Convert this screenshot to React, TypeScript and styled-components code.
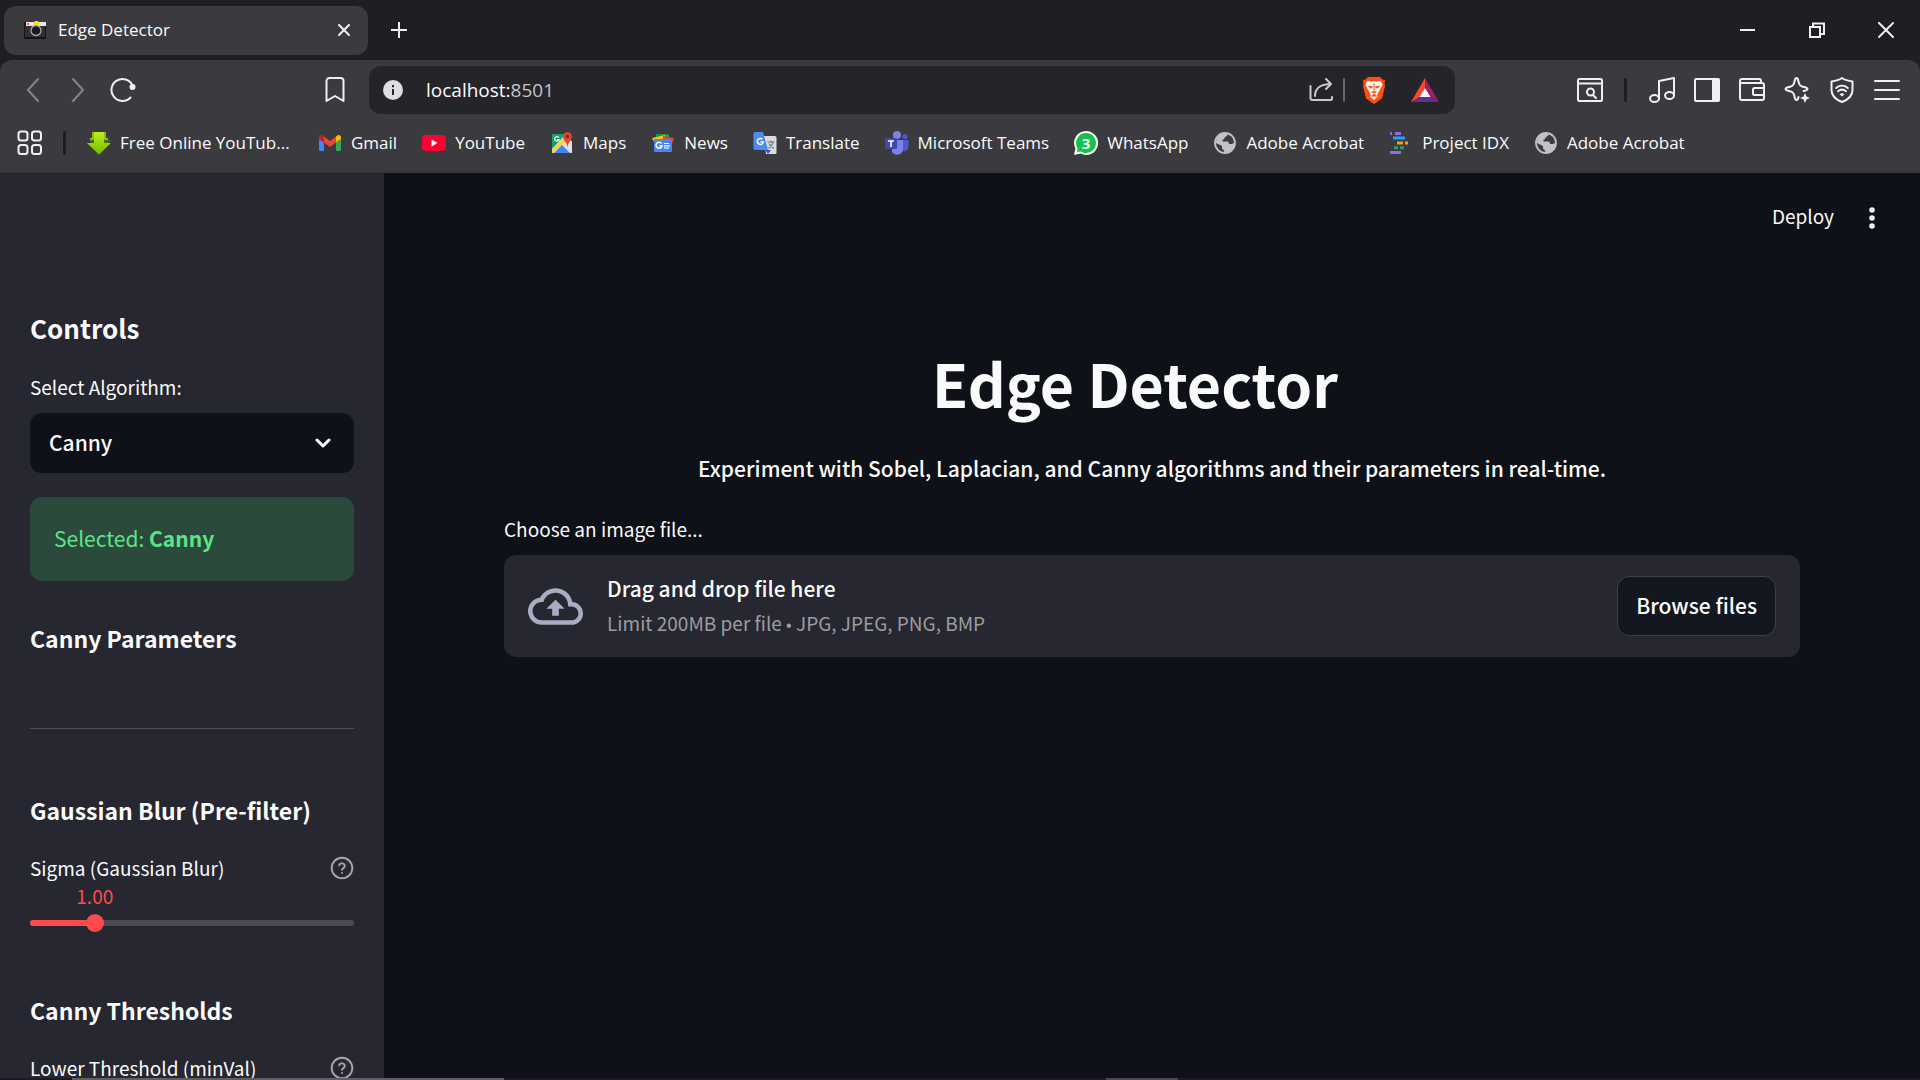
import React, { useState } from 'react';
import styled, { createGlobalStyle } from 'styled-components';

const ui = '"Segoe UI", "Open Sans", "Noto Sans", sans-serif';
const app = '"Source Sans Pro", "Noto Sans CJK SC", sans-serif';

const Global = createGlobalStyle`
  *, *::before, *::after { box-sizing: border-box; }
  body { margin: 0; background: #0e1117; overflow: hidden; }
  button, input, select { font: inherit; color: inherit; }
  h1, h2, h3, p { margin: 0; }
`;

const Window = styled.div`
  display: flex; flex-direction: column; height: 100vh; overflow: hidden;
  background: #1f1e23; color: #fafafa; font-family: ${ui}; font-size: 18px;
`;
const IconButton = styled.button<{ $w?: number; $dim?: boolean }>`
  display: flex; align-items: center; justify-content: center; flex: none;
  width: ${p => p.$w ?? 45}px; height: 48px; padding: 0; border: 0; background: none;
  color: ${p => (p.$dim ? '#858488' : '#f0f0f4')};
  svg { display: block; }
`;
const TabStrip = styled.div`
  display: flex; align-items: center; flex: none; height: 60px; padding-left: 4px;
`;
const Tab = styled.div`
  display: flex; align-items: center; width: 364px; height: 49px; padding: 0 2px 0 20px;
  border-radius: 12px; background: #3b3a3f;
`;
const TabTitle = styled.span`flex: 1; margin-left: 12px; font-size: 17px; line-height: 24px;`;
const Spacer = styled.div`flex: 1;`;
const Chrome = styled.header`
  flex: none; height: 113px; background: #3b3a3f; border-radius: 12px 12px 0 0;
  border-bottom: 2px solid #36353a;
`;
const Toolbar = styled.div`display: flex; align-items: center; height: 60px; padding: 0 11px 0 10px;`;
const NavButtons = styled.div`display: flex; margin-right: 167px;`;
const Divider = styled.span<{ $light?: boolean }>`
  width: ${p => (p.$light ? 2 : 3)}px; height: 24px; border-radius: 1px; flex: none;
  background: ${p => (p.$light ? '#66656a' : '#1f1e23')};
`;
const ToolDivider = styled(Divider)`margin: 0 12px;`;
const Address = styled.div`
  display: flex; align-items: center; flex: 1; height: 48px; margin: 0 112px 0 12px; padding: 0 8px 0 14px;
  border-radius: 12px; background: #252429;
`;
const AddressField = styled.label`
  position: relative; flex: 1; margin-left: 23px; font-size: 19px; line-height: 28px;
  span { color: #c4c4c8; }
`;
const AddressInput = styled.input`
  position: absolute; inset: 0; width: 100%; border: 0; padding: 0; background: none;
  color: transparent; outline: 0;
`;
const Bookmarks = styled.nav`display: flex; align-items: center; height: 46px; padding: 0 7px;`;
const BookmarkDivider = styled(Divider)`margin: 0 21px 0 11px;`;
const BookmarkList = styled.div`display: flex; align-items: center; gap: 25px;`;
const Bookmark = styled.a<{ $long?: boolean }>`
  display: flex; align-items: center; gap: 9px; color: inherit; text-decoration: none;
  font-size: 17px; line-height: 24px; white-space: nowrap; width: ${p => (p.$long ? '206px' : 'auto')};
  svg { display: block; flex: none; }
`;

const Page = styled.div`
  display: flex; flex: 1; min-height: 0; background: #0e1117; font-family: ${app}; font-size: 21px;
  font-weight: 500;
`;
const Sidebar = styled.aside`
  flex: none; width: 384px; padding: 137px 30px 0; background: #262730; overflow: hidden;
`;
const Heading = styled.h2`font-size: 26px; line-height: 36px; font-weight: 600;`;
const SubHeading = styled.h3`font-size: 23px; line-height: 36px; font-weight: 600;`;
const FieldLabel = styled.label`display: block; font-size: 19px; line-height: 32px; font-weight: 400;`;
const SelectBox = styled.div`
  position: relative; margin-top: 10px;
  svg { position: absolute; right: 23px; top: 25px; pointer-events: none; }
`;
const Select = styled.select`
  display: block; width: 100%; height: 60px; padding: 0 19px 2px; border: 0; border-radius: 12px;
  appearance: none; background: #0e1117; font-size: 21px;
`;
const Success = styled.p`
  margin-top: 24px; padding: 23px 24px 25px; border-radius: 12px; background: #2b4a3c; color: #5ce488;
  font-size: 21px; line-height: 36px; font-weight: 400;
`;
const Rule = styled.hr`margin: 72px 0 63px; border: 0; height: 1px; background: #4c4d56;`;
const Row = styled.div`display: flex; align-items: center; justify-content: space-between;`;
const Help = styled.button`
  display: flex; width: 24px; height: 24px; padding: 0; border: 0; background: none; color: #a3a3a8;
`;
const SliderValue = styled.output`
  display: block; width: 60px; font-size: 19px; line-height: 24px; font-weight: 400;
  text-align: center; color: #ff4b4b;
`;
const SliderBox = styled.div`
  position: relative; display: flex; align-items: center; height: 18px; margin-top: 6px;
`;
const Track = styled.div`flex: 1; height: 6px; border-radius: 3px; background: #4a4b55;`;
const Fill = styled.div`height: 6px; border-radius: 3px; background: #ff4b4b;`;
const Slider = styled.input`
  position: absolute; left: -9px; top: 0; width: calc(100% + 18px); height: 18px; margin: 0;
  appearance: none; background: none;
  &::-webkit-slider-thumb {
    appearance: none; width: 18px; height: 18px; border-radius: 50%; background: #ff4b4b;
  }
`;
const Gap = styled.div<{ $h: number }>`height: ${p => p.$h}px;`;

const Main = styled.main`flex: 1; min-width: 0;`;
const AppBar = styled.div`
  display: flex; align-items: center; justify-content: flex-end; height: 90px; padding: 0 33px 0 0;
`;
const Deploy = styled.button`
  border: 0; padding: 0 0 4px; margin-right: 23px; background: none; font-size: 19px; line-height: 32px;
  font-weight: 400;
`;
const Content = styled.div`padding: 80px 120px 0;`;
const Title = styled.h1`
  padding-right: 34px; font-size: 59px; line-height: 80px; font-weight: 700; text-align: center;
`;
const Lead = styled.p`margin-top: 27px; line-height: 36px; text-align: center;`;
const Drop = styled.div`
  display: flex; align-items: center; height: 102px; margin-top: 10px; padding: 0 24px;
  border-radius: 12px; background: #262730;
`;
const DropText = styled.div`flex: 1; margin-left: 24px;`;
const DropTitle = styled.div`line-height: 36px;`;
const DropNote = styled.div`font-size: 19px; line-height: 34px; font-weight: 400; color: #9c9ca1;`;
const Bullet = styled.span`font-family: "Liberation Sans", sans-serif; font-size: 16px;`;
const Browse = styled.button`
  height: 60px; padding: 0 18px 2px; border: 1px solid #3e4048; border-radius: 12px; background: #131720;
  font-size: 21px;
`;
const Taskbar = styled.div`
  flex: none; height: 2px;
  background: linear-gradient(to right, #1c1b1c 72px, #5f5e60 72px, #5f5e60 504px, #1c1b1c 504px, #1c1b1c 1106px, #4b4b4c 1106px, #4b4b4c 1178px, #1c1b1c 1178px);
`;

const line = { fill: 'none', stroke: 'currentColor', strokeWidth: 2, strokeLinecap: 'round' as const, strokeLinejoin: 'round' as const };

const Camera = () => (
  <svg width="22" height="20" viewBox="0 0 22 20">
    <rect x="0" y="2" width="22" height="17" rx="1" fill="#151515" />
    <rect x="1" y="6" width="20" height="11" fill="#303030" />
    <rect x="2" y="2" width="20" height="4" fill="#e8e8e8" />
    <circle cx="4" cy="4" r="1" fill="#e33" />
    <circle cx="12" cy="10.500" r="5" fill="#1b1b1b" stroke="#a9a9a9" strokeWidth="1.300" />
    <path d="M9 3h1l1-2h3l1 2h1l-2 2h-3z" fill="#ffe000" />
  </svg>
);
const Globe = () => (
  <svg width="24" height="24" viewBox="0 0 24 24">
    <circle cx="12" cy="12" r="10" fill="none" stroke="#bfc2c7" strokeWidth="1.800" />
    <path d="M3 12C3 6 7 2 13 2.500c1.500.5 2 1 1 2.200L11.500 6.500c0 1.500-.5 2-2 2v2h5c1 0 1.500 1 1.500 2.500h2.500c1 0 1.500-.8 3-1C21.500 17 18 21.500 12 21.500c-1-.4-1-1-1-2.500-1.500 0-2-1-2-2.500v-1.500z" fill="#bfc2c7" />
  </svg>
);
const bookmarks: { label: string; icon: React.ReactNode; long?: boolean }[] = [
  { label: 'Free Online YouTub...', long: true, icon: (
    <svg width="24" height="24" viewBox="0 0 24 24">
      <defs><linearGradient id="dl" x1="0" y1="0" x2="0" y2="1"><stop offset="0" stopColor="#b9f01e" /><stop offset="1" stopColor="#76b900" /></linearGradient></defs>
      <path d="M2 7h3V1h14v6h3l-2 2h4L12 24 0 12h4z" fill="#4b6b10" />
      <path d="M7 1h10v11h7L12 23.500 0 12h7z" fill="url(#dl)" />
      <path d="M3 8h3V1M21 8h-3V1" fill="none" stroke="#9fdc12" strokeWidth="1.500" />
    </svg>) },
  { label: 'Gmail', icon: (
    <svg width="24" height="24" viewBox="0 0 24 24">
      <path d="M1 8v10.500A1.500 1.500 0 0 0 2.500 20H6v-8.500z" fill="#4285f4" />
      <path d="M18 20h3.500a1.500 1.500 0 0 0 1.500-1.500V8l-5 3.500z" fill="#34a853" />
      <path d="M18 5.500v6L23 8V6.200c0-2-2.200-3-3.800-1.800z" fill="#fbbc04" />
      <path d="M6 11.500v-6L12 10l6-4.500v6L12 16z" fill="#ea4335" />
      <path d="M1 6.200V8l5 3.500v-6L4.800 4.400C3.200 3.200 1 4.200 1 6.200z" fill="#c5221f" />
    </svg>) },
  { label: 'YouTube', icon: (
    <svg width="24" height="24" viewBox="0 0 24 24">
      <rect y="4" width="24" height="16" rx="4" fill="#ff0033" /><path d="M9.500 8.500v7l6-3.500z" fill="#fff" />
    </svg>) },
  { label: 'Maps', icon: (
    <svg width="24" height="24" viewBox="0 0 24 24">
      <rect x="2" y="3" width="19" height="19" rx="1" fill="#e4e4e4" />
      <path d="M2 3h14L2 18z" fill="#1aa260" />
      <path d="M2 22v-3L15 6l3 4z" fill="#ffce3a" /><path d="M12 13l9 9h1V10z" fill="#dfe1e4" /><path d="M4 22l8-8 8 8z" fill="#4285f4" />
      <path d="M17.500 1a4.500 4.500 0 0 1 4.500 4.500c0 4-4 5-4.500 11-.5-6-4.500-7-4.500-11A4.500 4.500 0 0 1 17.500 1z" fill="#e04434" />
      <circle cx="17.500" cy="5.500" r="1.700" fill="#8c241c" />
      <path d="M8.800 6.500a2.300 2.300 0 1 0 .3 2.200H7" fill="none" stroke="#fff" strokeWidth="1.200" />
    </svg>) },
  { label: 'News', icon: (
    <svg width="24" height="24" viewBox="0 0 24 24">
      <path d="M5 3h13v8H5z" fill="#139a50" /><path d="M1 7l13-3 2 9H4z" fill="#ffc107" /><path d="M12 5l11 2-3 10h-9z" fill="#e5403a" />
      <rect x="3" y="8" width="18" height="13" rx="1" fill="#4a86f3" />
      <path d="M10.500 12.500a3 3 0 1 0 .5 2.500H8.500" fill="none" stroke="#fff" strokeWidth="1.500" />
      <path d="M13 12.500h5M13 14.800h6M13 17h5" stroke="#fff" strokeWidth="1.200" />
    </svg>) },
  { label: 'Translate', icon: (
    <svg width="24" height="24" viewBox="0 0 24 24">
      <path d="M10 5h12a1.500 1.500 0 0 1 1.500 1.500v15A1.500 1.500 0 0 1 22 23h-9z" fill="#dcdcdc" />
      <path d="M13 19h-1l3 4 3-4z" fill="#3b4fc0" />
      <path d="M2 1h8l5 18H2a1.500 1.500 0 0 1-1.500-1.500v-15A1.500 1.500 0 0 1 2 1z" fill="#4c8bf5" />
      <path d="M9.500 8.300a3 3 0 1 0 .8 2.700H7.500" fill="none" stroke="#fff" strokeWidth="1.500" />
      <path d="M14.500 11h7M18 9.500V11M20 11c-.5 3-2.500 5-4.500 6.500M16 12.500c1 2 3 4 5 5" fill="none" stroke="#64767c" strokeWidth="1.200" />
    </svg>) },
  { label: 'Microsoft Teams', icon: (
    <svg width="24" height="24" viewBox="0 0 24 24">
      <circle cx="12" cy="4" r="4" fill="#7b83eb" /><circle cx="20" cy="5.500" r="2.600" fill="#5059c9" />
      <path d="M15 9h8.500v7a4.500 4.500 0 0 1-7 3.500z" fill="#5059c9" />
      <path d="M7 9h11v9a6 6 0 0 1-11 3z" fill="#7b83eb" />
      <rect x="0" y="7" width="12" height="11" rx="1" fill="#4048b0" />
      <path d="M3 10h6M6 10v6" stroke="#fff" strokeWidth="1.700" />
    </svg>) },
  { label: 'WhatsApp', icon: (
    <svg width="24" height="24" viewBox="0 0 24 24">
      <path d="M12 0a12 12 0 1 1-5.500 22.600L0 24l1.400-6.500A12 12 0 0 1 12 0z" fill="#f4fff6" />
      <path d="M12 2a10 10 0 1 1-5.300 18.500L3 21l.6-3.800A10 10 0 0 1 12 2z" fill="#13c14b" />
      <text x="12" y="17.500" textAnchor="middle" fontFamily="Open Sans" fontSize="15" fontWeight="700" fill="#fff">3</text>
    </svg>) },
  { label: 'Adobe Acrobat', icon: <Globe /> },
  { label: 'Project IDX', icon: (
    <svg width="24" height="24" viewBox="0 0 24 24" fill="none" strokeWidth="3">
      <path d="M1 2.500h2M6 2.500h6M1 21.500h11" stroke="#9168f0" />
      <path d="M4 7h12" stroke="#2a9df4" /><path d="M8 12h6M16 12h3" stroke="#f59b2c" /><path d="M5 16.700h4M11 16.700h4" stroke="#21a366" />
    </svg>) },
  { label: 'Adobe Acrobat', icon: <Globe /> },
];

const HelpIcon = () => (
  <svg width="24" height="24" viewBox="0 0 24 24" {...line}>
    <circle cx="12" cy="12" r="10.300" /><path d="M9.200 9.200a2.900 2.900 0 0 1 5.600.9c0 1.900-2.800 2.500-2.800 3.700M12 17v.1" />
  </svg>
);

export default function App() {
  const [sigma, setSigma] = useState(1);
  const fill = (sigma / 5) * 100;
  return (
    <Window>
      <Global />
      <TabStrip>
        <Tab>
          <Camera />
          <TabTitle>Edge Detector</TabTitle>
          <IconButton aria-label="Close tab"><svg width="12" height="12" viewBox="0 0 12 12" {...line}><path d="M1 1l10 10M11 1L1 11" /></svg></IconButton>
        </Tab>
        <IconButton aria-label="New tab" $w={62}><svg width="16" height="16" viewBox="0 0 16 16" {...line} strokeLinecap="butt"><path d="M8 0v16M0 8h16" /></svg></IconButton>
        <Spacer />
        <IconButton aria-label="Minimize" $w={69}><svg width="16" height="16" viewBox="0 0 16 16" {...line} strokeLinecap="butt"><path d="M0 8h15" /></svg></IconButton>
        <IconButton aria-label="Restore" $w={69}><svg width="16" height="16" viewBox="0 0 16 16" {...line} strokeLinejoin="miter"><path d="M1 5h10v10H1zM4 5V1.500h11V12h-4" /></svg></IconButton>
        <IconButton aria-label="Close" $w={69}><svg width="16" height="16" viewBox="0 0 16 16" {...line}><path d="M1 1l14 14M15 1L1 15" /></svg></IconButton>
      </TabStrip>
      <Chrome>
        <Toolbar>
          <NavButtons>
            <IconButton aria-label="Back" $dim><svg width="14" height="24" viewBox="0 0 14 24" {...line}><path d="M12 1L2 12l10 11" /></svg></IconButton>
            <IconButton aria-label="Forward" $dim><svg width="14" height="24" viewBox="0 0 14 24" {...line}><path d="M2 1l10 11L2 23" /></svg></IconButton>
            <IconButton aria-label="Reload"><svg width="26" height="26" viewBox="0 0 26 26" {...line}><path d="M20.500 20.500A11 11 0 1 1 22.500 8.500" /><circle cx="22.500" cy="10" r="3" fill="currentColor" stroke="none" /></svg></IconButton>
          </NavButtons>
          <IconButton aria-label="Bookmark this page"><svg width="20" height="26" viewBox="0 0 20 26" {...line}><path d="M1.500 4a3 3 0 0 1 3-3h11a3 3 0 0 1 3 3v20L10 19l-8.500 5z" /></svg></IconButton>
          <Address>
            <svg width="20" height="20" viewBox="0 0 20 20"><circle cx="10" cy="10" r="10" fill="#dedde2" /><path d="M10 9v6M10 5v2.200" stroke="#252429" strokeWidth="2" /></svg>
            <AddressField>localhost:<span>8501</span><AddressInput aria-label="Address" /></AddressField>
            <IconButton aria-label="Share"><svg width="24" height="24" viewBox="0 0 24 24" {...line} stroke="#c9c9cd"><path d="M1.500 8v12a2 2 0 0 0 2 2h18a1.500 1.500 0 0 0 1.500-1.500V19M6 18c0-7 5-12 16-12M17 1l5 5-5 5" /></svg></IconButton>
            <Divider $light />
            <IconButton aria-label="Brave Shields" $w={57}>
              <svg width="24" height="28" viewBox="0 0 24 28">
                <path d="M6 1h12l2.500 2.500L23 4l-.5 4L23 10l-3 12.500L12 28l-8-5.500L1 10l.5-2L1 4l2.500-.5z" fill="#ff4f10" />
                <path d="M12 5l3 .5L18.500 5l2 3.500-1 2.500L16 17l-1 2.500 1 1L12 24l-4-3.500 1-1L8 17l-3.500-6-1-2.500 2-3.500L9 5.500z" fill="#fff" />
                <path d="M6.500 10l3.500 1-1 1zM17.500 10L14 11l1 1zM12 7.500V15M9.500 15.500L12 17l2.500-1.500M9.500 20.500l2.500-2 2.500 2" fill="#ff4f10" stroke="#ff4f10" strokeWidth="1.200" />
              </svg>
            </IconButton>
            <IconButton aria-label="Rewards">
              <svg width="28" height="24" viewBox="0 0 28 24"><path d="M14 0L0 24l9-5 5-9z" fill="#ff4724" /><path d="M14 0l14 24-9-5-5-9z" fill="#9e1f63" /><path d="M0 24h28l-9-5H9z" fill="#662d91" /><path d="M14 10l-5.500 9h11z" fill="#fff" /></svg>
            </IconButton>
          </Address>
          <IconButton aria-label="Search tabs"><svg width="26" height="24" viewBox="0 0 26 24" {...line}><rect x="1" y="1" width="24" height="22" rx="1.500" /><path d="M1 5.500h24M16 17l3 3" /><circle cx="13.500" cy="14" r="3.500" /></svg></IconButton>
          <ToolDivider />
          <IconButton aria-label="Playlist"><svg width="26" height="26" viewBox="0 0 26 26" {...line}><ellipse cx="5.500" cy="21.500" rx="4.500" ry="3.500" /><ellipse cx="20.500" cy="18.500" rx="4.500" ry="3.500" /><path d="M10 21.500V4l15-3v17.500" /></svg></IconButton>
          <IconButton aria-label="Sidebar"><svg width="26" height="24" viewBox="0 0 26 24" {...line}><rect x="1" y="1" width="24" height="22" rx="1" /><path d="M19 1v22h5V1z" fill="currentColor" /></svg></IconButton>
          <IconButton aria-label="Wallet"><svg width="26" height="24" viewBox="0 0 26 24" {...line}><path d="M1 5V3a2 2 0 0 1 2-2h17a2 2 0 0 1 2 2v2M1 5h22a2 2 0 0 1 2 2v13a2 2 0 0 1-2 2H3a2 2 0 0 1-2-2zM25 10h-9.500a1.500 1.500 0 0 0-1.500 1.500v4a1.500 1.500 0 0 0 1.500 1.500H25" /></svg></IconButton>
          <IconButton aria-label="Leo"><svg width="26" height="26" viewBox="0 0 26 26" {...line}><path d="M12.500 1c1.200 0 1.500 1 2 3.500.7 3.500 1.500 4.500 4.500 5.300 3 .8 4.500 1 4.500 2.200s-1.500 1.500-4 2M12.500 1c-1.200 0-1.500 1-2 3.500-.7 3.500-1.500 4.500-4.500 5.300-3 .8-4.500 1-4.500 2.200s1.500 1.400 4.500 2.200c3 .8 3.800 1.800 4.500 5.300.5 2.500.8 3.500 2 3.500s1.500-.5 2-3" /><path d="M21 16l1.500 3.500L26 21l-3.500 1.500L21 26l-1.500-3.500L16 21l3.500-1.500z" fill="currentColor" stroke="none" /></svg></IconButton>
          <IconButton aria-label="VPN"><svg width="24" height="26" viewBox="0 0 24 26" {...line}><path d="M12 1c3.500 2.500 6.500 3 10.500 3.500V13c0 6-4 9.500-10.500 12C5.500 22.500 1.500 19 1.500 13V4.500C5.500 4 8.500 3.500 12 1z" /><path d="M6.200 11c3.500-3 8.100-3 11.600 0M8 14.200c2.500-2 5.500-2 8 0" /><path d="M12 16l2.500 1.200L12 19.500l-2.500-2.300z" fill="currentColor" stroke="none" /></svg></IconButton>
          <IconButton aria-label="Menu"><svg width="26" height="20" viewBox="0 0 26 20" {...line}><path d="M1 1h24M1 10h24M1 19h24" /></svg></IconButton>
        </Toolbar>
        <Bookmarks>
          <IconButton aria-label="Apps"><svg width="26" height="26" viewBox="0 0 26 26" {...line}><rect x="1.500" y="1.500" width="9" height="9" rx="2.500" /><rect x="15" y="1.500" width="9" height="9" rx="2.500" /><rect x="1.500" y="15" width="9" height="9" rx="2.500" /><rect x="15" y="15" width="9" height="9" rx="2.500" /></svg></IconButton>
          <BookmarkDivider />
          <BookmarkList>
            {bookmarks.map((b, i) => <Bookmark href="#" key={i} $long={b.long}>{b.icon}{b.label}</Bookmark>)}
          </BookmarkList>
        </Bookmarks>
      </Chrome>
      <Page>
        <Sidebar>
          <Heading>Controls</Heading>
          <Gap $h={25} />
          <FieldLabel htmlFor="algorithm">Select Algorithm:</FieldLabel>
          <SelectBox>
            <Select id="algorithm" defaultValue="Canny"><option>Canny</option><option>Sobel</option><option>Laplacian</option></Select>
            <svg width="16" height="11" viewBox="0 0 16 11" {...line} strokeWidth={3}><path d="M2 2l6 6 6-6" /></svg>
          </SelectBox>
          <Success>Selected: <strong>Canny</strong></Success>
          <Gap $h={39} />
          <SubHeading>Canny Parameters</SubHeading>
          <Rule />
          <SubHeading>Gaussian Blur (Pre-filter)</SubHeading>
          <Gap $h={24} />
          <Row><FieldLabel htmlFor="sigma">Sigma (Gaussian Blur)</FieldLabel><Help aria-label="About sigma"><HelpIcon /></Help></Row>
          <SliderValue htmlFor="sigma" style={{ marginLeft: `calc(${fill}% - 30px)` }}>{sigma.toFixed(2)}</SliderValue>
          <SliderBox>
            <Track><Fill style={{ width: `${fill}%` }} /></Track>
            <Slider id="sigma" type="range" min={0} max={5} step={0.01} value={sigma}
              onChange={e => setSigma(Number(e.target.value))} />
          </SliderBox>
          <Gap $h={60} />
          <SubHeading>Canny Thresholds</SubHeading>
          <Gap $h={24} />
          <Row><FieldLabel>Lower Threshold (minVal)</FieldLabel><Help aria-label="About lower threshold"><HelpIcon /></Help></Row>
        </Sidebar>
        <Main>
          <AppBar>
            <Deploy>Deploy</Deploy>
            <IconButton aria-label="Main menu" $w={30}><svg width="6" height="22" viewBox="0 0 6 22" fill="currentColor"><circle cx="3" cy="3" r="2.800" /><circle cx="3" cy="11" r="2.800" /><circle cx="3" cy="19" r="2.800" /></svg></IconButton>
          </AppBar>
          <Content>
            <Title>Edge Detector</Title>
            <Lead>Experiment with Sobel, Laplacian, and Canny algorithms and their parameters in real-time.</Lead>
            <Gap $h={27} />
            <FieldLabel as="div">Choose an image file...</FieldLabel>
            <Drop>
              <svg width="55" height="37" viewBox="0 4 24 16" fill="#a9adc2"><path d="M19.350 10.040A7.490 7.490 0 0 0 12 4C9.110 4 6.600 5.640 5.350 8.040A5.994 5.994 0 0 0 0 14c0 3.310 2.690 6 6 6h13c2.760 0 5-2.240 5-5 0-2.640-2.050-4.780-4.650-4.960zM19 18H6c-2.210 0-4-1.790-4-4s1.790-4 4-4h.710C7.370 7.690 9.480 6 12 6c3.040 0 5.500 2.460 5.500 5.500v.5H19c1.660 0 3 1.340 3 3s-1.340 3-3 3zM8 13h2.550v3h2.900v-3H16l-4-4z" /></svg>
              <DropText>
                <DropTitle>Drag and drop file here</DropTitle>
                <DropNote>Limit 200MB per file <Bullet>•</Bullet> JPG, JPEG, PNG, BMP</DropNote>
              </DropText>
              <Browse>Browse files</Browse>
            </Drop>
          </Content>
        </Main>
      </Page>
      <Taskbar />
    </Window>
  );
}
